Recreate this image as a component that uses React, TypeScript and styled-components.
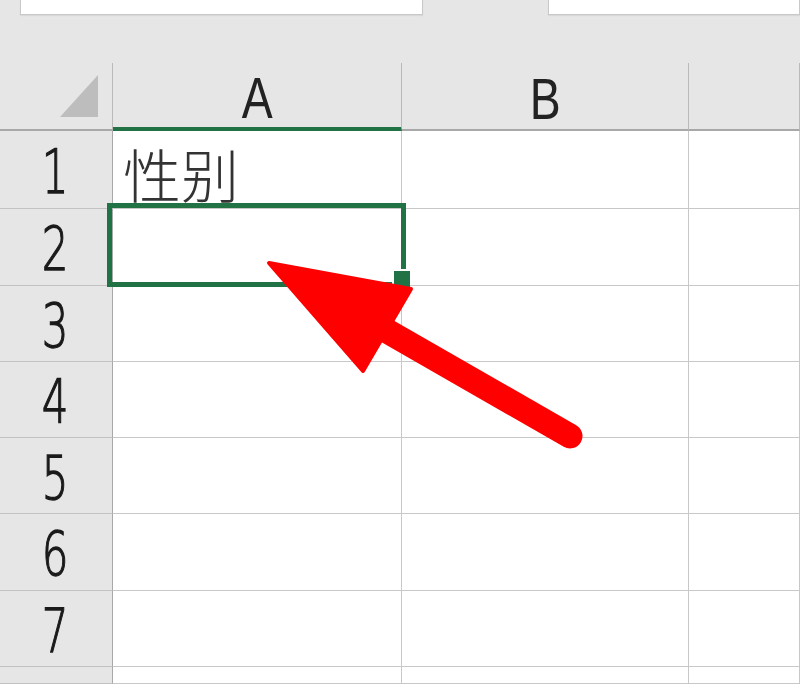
import React from "react";
import styled, { createGlobalStyle } from "styled-components";

const GlobalStyle = createGlobalStyle`
  html, body { margin: 0; padding: 0; }
  body {
    background: #e6e6e6;
    overflow: hidden;
    font-family: "Liberation Sans", Arial, sans-serif;
  }
`;

const Page = styled.div`
  position: relative;
  width: 800px;
  height: 684px;
  overflow: hidden;
  background: #e6e6e6;
  display: flex;
  flex-direction: column;
`;

const TopBar = styled.div`
  display: flex;
  flex: 0 0 63px;
  padding-left: 20px;
  box-sizing: border-box;
`;

const InputBox = styled.div<{ $width?: number; $gap?: number }>`
  height: 15px;
  background: #ffffff;
  border: 1px solid #c9c9c9;
  border-top: none;
  box-sizing: border-box;
  box-shadow: 0 1px 1px rgba(0, 0, 0, 0.06);
  margin-left: ${(p) => p.$gap ?? 0}px;
  ${(p) => (p.$width ? `width: ${p.$width}px;` : "flex: 1;")}
`;

const Sheet = styled.div<{ $rows: string }>`
  flex: 1;
  display: grid;
  grid-template-columns: 113px 289px 287px 1fr;
  grid-template-rows: ${(p) => p.$rows};
`;

const Corner = styled.div`
  border-right: 1px solid #b9b9b9;
  border-bottom: 2px solid #a8a8a8;
  box-sizing: border-box;
  display: flex;
  align-items: flex-end;
  justify-content: flex-end;
  padding: 0 14px 12px 0;
`;

const ColHeader = styled.div<{ $active?: boolean }>`
  display: flex;
  align-items: center;
  justify-content: center;
  padding-top: 6px;
  box-sizing: border-box;
  border-right: 1px solid #b9b9b9;
  border-bottom: ${(p) => (p.$active ? "4px solid #217346" : "2px solid #a8a8a8")};
  font-size: 58px;
  color: #222222;
  line-height: 1;
`;

const RowHeader = styled.div`
  display: flex;
  align-items: center;
  justify-content: center;
  padding-top: 4px;
  box-sizing: border-box;
  border-right: 1px solid #a8a8a8;
  border-bottom: 1px solid #c2c2c2;
  font-family: "DejaVu Sans", "Liberation Sans", sans-serif;
  font-weight: 200;
  font-size: 60px;
  color: #1a1a1a;
  -webkit-text-stroke: 1.3px #1a1a1a;
  line-height: 1;
  padding-right: 2px;
`;

const Narrow = styled.span<{ $scale: number }>`
  display: inline-block;
  transform: scaleX(${(p) => p.$scale});
`;

const Cell = styled.div`
  position: relative;
  background: #ffffff;
  box-sizing: border-box;
  border-right: 1px solid #c8c8c8;
  border-bottom: 1px solid #c8c8c8;
  display: flex;
  align-items: flex-end;
  padding: 0 0 6px 10px;
  font-family: "Noto Sans CJK SC", "Noto Sans", sans-serif;
  font-weight: 300;
  font-size: 58px;
  line-height: 1;
  color: #333333;
`;

const Selection = styled.div`
  position: absolute;
  z-index: 2;
  top: -6px;
  left: -6px;
  right: -5px;
  bottom: -2px;
  border: 5px solid #217346;
  box-sizing: border-box;
  pointer-events: none;
`;

const FillHandle = styled.div`
  position: absolute;
  right: -9px;
  bottom: -5px;
  width: 16px;
  height: 16px;
  background: #217346;
  box-shadow: -2px -2px 0 #ffffff;
`;

const Overlay = styled.svg`
  position: absolute;
  z-index: 3;
  left: 0;
  top: 0;
  pointer-events: none;
`;

const rowHeights = [78, 77, 76, 76, 76, 77, 76];
const cols = ["A", "B", ""];

export default function App() {
  const rowsTemplate = `68px ${rowHeights.map((h) => `${h}px`).join(" ")} 1fr`;
  return (
    <Page>
      <GlobalStyle />
      <TopBar>
        <InputBox $width={403} />
        <InputBox $gap={125} />
      </TopBar>
      <Sheet $rows={rowsTemplate}>
        <Corner>
          <svg width="38" height="42" viewBox="0 0 38 42">
            <polygon points="0,42 38,0 38,42" fill="#bdbdbd" />
          </svg>
        </Corner>
        {cols.map((c, i) => (
          <ColHeader key={i} $active={c === "A"}>
            {c ? <Narrow $scale={0.8}>{c}</Narrow> : null}
          </ColHeader>
        ))}
        {rowHeights.map((_, r) => (
          <React.Fragment key={r}>
            <RowHeader>
              <Narrow $scale={0.7}>{r + 1}</Narrow>
            </RowHeader>
            <Cell>
              {r === 0 ? "性别" : null}
              {r === 1 ? (
                <Selection>
                  <FillHandle />
                </Selection>
              ) : null}
            </Cell>
            <Cell />
            <Cell />
          </React.Fragment>
        ))}
        <RowHeader />
        <Cell />
        <Cell />
        <Cell />
      </Sheet>
      <Overlay width="800" height="684" viewBox="0 0 800 684">
        <line x1="570" y1="436" x2="380" y2="327" stroke="#ff0000" strokeWidth="25" strokeLinecap="round" />
        <polygon
          points="269,263 411,289 363,371"
          fill="#ff0000"
          stroke="#ff0000"
          strokeWidth="4"
          strokeLinejoin="round"
        />
      </Overlay>
    </Page>
  );
}
